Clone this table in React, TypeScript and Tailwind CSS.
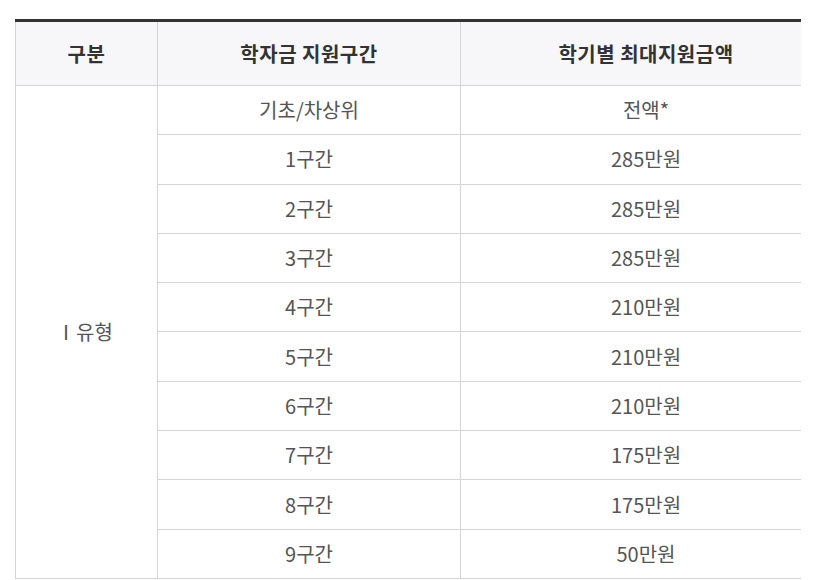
const rows = [
  { range: '기초/차상위', amount: '전액*' },
  { range: '1구간', amount: '285만원' },
  { range: '2구간', amount: '285만원' },
  { range: '3구간', amount: '285만원' },
  { range: '4구간', amount: '210만원' },
  { range: '5구간', amount: '210만원' },
  { range: '6구간', amount: '210만원' },
  { range: '7구간', amount: '175만원' },
  { range: '8구간', amount: '175만원' },
  { range: '9구간', amount: '50만원' },
];

export default function App() {
  return (
    <div
      className="bg-white w-[814px] h-[580px] overflow-hidden pt-[19px] pl-[15px]"
      style={{ fontFamily: '"Noto Sans CJK KR", "Noto Sans", sans-serif' }}
    >
      <div className="w-[786px] border-t-[3px] border-[#333333]">
        {/* header */}
        <div className="flex h-[64px] bg-[#f7f7f9] border-b border-[#d4d4d4] text-[20px] font-bold text-[#333333] tracking-[0.5px]">
          <div className="w-[142px] flex items-center justify-center border-l border-[#d4d4d4]">구분</div>
          <div className="w-[303px] flex items-center justify-center border-l border-[#d4d4d4]">학자금 지원구간</div>
          <div className="flex-1 flex items-center justify-center pl-[30px] border-l border-[#d4d4d4]">학기별 최대지원금액</div>
        </div>

        {/* body */}
        <div className="flex text-[20px] text-[#555555]">
          <div className="w-[142px] flex items-center justify-center pr-[4px] border-l border-b border-[#d4d4d4]">
            <span>Ⅰ</span>
            <span>유형</span>
          </div>
          <div className="flex-1">
            {rows.map((r) => (
              <div key={r.range} className="flex h-[49.3px] border-b border-[#d4d4d4]">
                <div className="w-[303px] flex items-center justify-center border-l border-[#d4d4d4]">{r.range}</div>
                <div className="flex-1 flex items-center justify-center pl-[30px] border-l border-[#d4d4d4]">{r.amount}</div>
              </div>
            ))}
          </div>
        </div>
      </div>
    </div>
  );
}
